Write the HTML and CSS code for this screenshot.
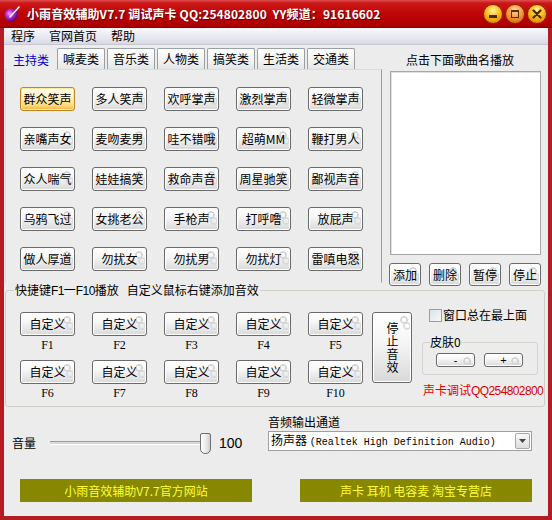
FILE: index.html
```html
<!DOCTYPE html>
<html lang="zh-CN">
<head>
<meta charset="utf-8">
<title>小雨音效辅助V7.7</title>
<link rel="stylesheet" href="styles.css">
</head>
<body>
<div class="window">
  <div class="titlebar">
    <svg class="app-icon" viewBox="0 0 18 18" width="18" height="18">
      <defs>
        <radialGradient id="ball" cx="40%" cy="40%" r="60%">
          <stop offset="0" stop-color="#f4a0ff"/>
          <stop offset="0.5" stop-color="#b02ad0"/>
          <stop offset="1" stop-color="#5a0a80"/>
        </radialGradient>
      </defs>
      <circle cx="8" cy="10" r="6.5" fill="url(#ball)"/>
      <path d="M7 12 L16 2" stroke="#fff" stroke-width="1.6" stroke-linecap="round"/>
      <path d="M9 9 L15 4" stroke="#f0c8ff" stroke-width="0.8"/>
    </svg>
    <span class="title">小雨音效辅助V7.7 调试声卡 QQ:254802800&nbsp;&nbsp;YY频道：91616602</span>
    <div class="ctrls">
      <span class="cb cb-min"><i class="g-min"></i></span>
      <span class="cb cb-max"><i class="g-max"></i></span>
      <span class="cb cb-close"><svg viewBox="0 0 10 10" width="10" height="10"><path d="M1.5 1.5 L8.5 8.5 M8.5 1.5 L1.5 8.5" stroke="#4a2a00" stroke-width="2.2" stroke-linecap="round"/></svg></span>
    </div>
  </div>
  <div class="frame">
    <div class="menubar">
      <span>程序</span><span>官网首页</span><span>帮助</span>
    </div>
    <div class="content">
      <div class="top">
        <div class="tabs-area">
          <div class="tabs">
            <span class="tab active">主持类</span>
            <span class="tab">喊麦类</span>
            <span class="tab">音乐类</span>
            <span class="tab">人物类</span>
            <span class="tab">搞笑类</span>
            <span class="tab">生活类</span>
            <span class="tab">交通类</span>
          </div>
          <div class="panel">
            <div class="grid">
              <span class="btn focus">群众笑声</span>
              <span class="btn">多人笑声</span>
              <span class="btn">欢呼掌声</span>
              <span class="btn">激烈掌声</span>
              <span class="btn">轻微掌声</span>
              <span class="btn">亲嘴声女</span>
              <span class="btn">麦吻麦男</span>
              <span class="btn">哇不错哦</span>
              <span class="btn">超萌MM</span>
              <span class="btn">鞭打男人</span>
              <span class="btn">众人喘气</span>
              <span class="btn">娃娃搞笑</span>
              <span class="btn">救命声音</span>
              <span class="btn">周星驰笑</span>
              <span class="btn">鄙视声音</span>
              <span class="btn">乌鸦飞过</span>
              <span class="btn">女挑老公</span>
              <span class="btn">手枪声</span>
              <span class="btn">打呼噜</span>
              <span class="btn">放屁声</span>
              <span class="btn">做人厚道</span>
              <span class="btn">勿扰女</span>
              <span class="btn">勿扰男</span>
              <span class="btn">勿扰灯</span>
              <span class="btn">雷嗔电怒</span>
            </div>
          </div>
        </div>
        <div class="playlist">
          <div class="pl-label">点击下面歌曲名播放</div>
          <div class="list"></div>
          <div class="pl-btns">
            <span class="btn sm">添加</span>
            <span class="btn sm">删除</span>
            <span class="btn sm">暂停</span>
            <span class="btn sm">停止</span>
          </div>
        </div>
      </div>

      <fieldset class="hotkeys">
        <legend>快捷键<span class="half">F1</span>一<span class="half">F10</span>播放&nbsp;&nbsp;&nbsp;自定义鼠标右键添加音效</legend>
        <div class="hk-body">
          <div class="hk-grid">
            <div class="hk"><span class="btn">自定义</span><span class="fk">F1</span></div>
            <div class="hk"><span class="btn">自定义</span><span class="fk">F2</span></div>
            <div class="hk"><span class="btn">自定义</span><span class="fk">F3</span></div>
            <div class="hk"><span class="btn">自定义</span><span class="fk">F4</span></div>
            <div class="hk"><span class="btn">自定义</span><span class="fk">F5</span></div>
            <div class="hk"><span class="btn">自定义</span><span class="fk">F6</span></div>
            <div class="hk"><span class="btn">自定义</span><span class="fk">F7</span></div>
            <div class="hk"><span class="btn">自定义</span><span class="fk">F8</span></div>
            <div class="hk"><span class="btn">自定义</span><span class="fk">F9</span></div>
            <div class="hk"><span class="btn">自定义</span><span class="fk">F10</span></div>
          </div>
          <span class="btn stop"><span class="vtext">停止音效</span></span>
          <div class="hk-right">
            <label class="chk-row"><span class="chk"></span>窗口总在最上面</label>
            <fieldset class="skin">
              <legend>皮肤0</legend>
              <div class="skin-btns">
                <span class="btn tiny">-</span>
                <span class="btn tiny">+</span>
              </div>
            </fieldset>
            <div class="qq">声卡调试<span class="half">QQ254802800</span></div>
          </div>
        </div>
      </fieldset>

      <div class="bottom">
        <div class="volume">
          <span class="vol-label">音量</span>
          <div class="slider">
            <span class="track"></span>
            <span class="thumb"></span>
          </div>
          <span class="vol-val">100</span>
        </div>
        <div class="output">
          <div class="out-label">音频输出通道</div>
          <div class="select">
            <span class="sel-text">扬声器 <span class="latin">(Realtek High Definition Audio)</span></span>
            <span class="drop"><svg viewBox="0 0 7 4" width="7" height="4"><path d="M0 0 L7 0 L3.5 4 Z" fill="#444"/></svg></span>
          </div>
        </div>
      </div>

      <div class="links">
        <span class="olive">小雨音效辅助V7.7官方网站</span>
        <span class="olive">声卡 耳机 电容麦 淘宝专营店</span>
      </div>
    </div>
  </div>
</div>
</body>
</html>
```

FILE: styles.css
```css
* {
  box-sizing: border-box;
  margin: 0;
  padding: 0;
}

html, body {
  width: 552px;
  height: 520px;
  overflow: hidden;
}

body {
  font-family: "Noto Sans CJK SC", "Noto Sans", sans-serif;
  font-size: 12px;
  line-height: 14px;
  color: #000;
  background: #fff;
}

.window {
  width: 552px;
  height: 520px;
  display: flex;
  flex-direction: column;
}

/* ---------- title bar ---------- */
.titlebar {
  height: 28px;
  flex: none;
  display: flex;
  align-items: center;
  padding-left: 3px;
  color: #fff;
  background: linear-gradient(to bottom, #e05050 0, #cc1818 3px, #c00808 45%, #b40000 80%, #a80000 100%);
  border-bottom: 1px solid #8a0000;
}

.app-icon {
  flex: none;
  margin-top: 1px;
}

.title {
  margin-left: 6px;
  font-weight: bold;
  font-size: 12px;
  letter-spacing: 0.1px;
  white-space: nowrap;
  text-shadow: 1px 1px 0 #700000;
}

.ctrls {
  margin-left: auto;
  margin-right: 5px;
  display: flex;
  gap: 2px;
}

.cb {
  width: 20px;
  height: 20px;
  border-radius: 50%;
  display: flex;
  align-items: center;
  justify-content: center;
  border: 1px solid #8a2a00;
  background: radial-gradient(circle at 50% 30%, #fff2a0 0, #ffc830 35%, #f09800 70%, #c86000 100%);
}

.cb-max {
  background: radial-gradient(circle at 50% 30%, #ffd8a0 0, #f8a850 35%, #e67a20 70%, #b85010 100%);
}

.g-min {
  display: block;
  width: 8px;
  height: 3px;
  margin-top: 6px;
  background: #4a2a00;
}

.g-max {
  display: block;
  width: 8px;
  height: 8px;
  border: 1px solid #5a3000;
  border-top-width: 2px;
}

/* ---------- frame ---------- */
.frame {
  flex: 1;
  display: flex;
  flex-direction: column;
  border: 4px solid #b41c24;
  border-top: 0;
  box-shadow: inset 1px 0 0 #d84a50, inset -1px 0 0 #d84a50;
}

.menubar {
  height: 17px;
  flex: none;
  display: flex;
  align-items: center;
  gap: 14px;
  padding-left: 7px;
  background: linear-gradient(to bottom, #f8f8fc, #e4e4ee 70%, #d8d8e4);
  border-bottom: 1px solid #c8c8d4;
}

.content {
  flex: 1;
  background: #ececec;
}

.half {
  font-family: "Liberation Sans", sans-serif;
  font-size: 12px;
  letter-spacing: -0.6px;
}

/* ---------- top area ---------- */
.top {
  height: 238px;
  display: flex;
}

.tabs-area {
  width: 377px;
  margin-left: 1px;
  padding-top: 3px;
  display: flex;
  flex-direction: column;
}

.tabs {
  height: 21px;
  display: flex;
  gap: 2px;
  padding-left: 2px;
}

.tab {
  width: 48px;
  height: 21px;
  display: flex;
  align-items: center;
  justify-content: center;
  border: 1px solid #9aa0a4;
  border-bottom: 0;
  border-radius: 2px 2px 0 0;
  background: linear-gradient(to bottom, #ffffff, #f2f2f2 60%, #e6e6e6);
}

.tab.active {
  color: #0000c8;
  border-color: transparent;
  background: #ececec;
  height: 22px;
  margin-bottom: -1px;
  position: relative;
  z-index: 1;
}

.panel {
  flex: 1;
  border: 1px solid #dcdcdc;
  border-right-color: #9a9a9a;
  border-bottom-color: transparent;
  padding: 17px 0 0 14px;
}

.grid {
  display: grid;
  grid-template-columns: repeat(5, 55px);
  grid-auto-rows: 24px;
  column-gap: 17px;
  row-gap: 16px;
}

/* ---------- buttons ---------- */
.btn {
  display: flex;
  align-items: center;
  justify-content: center;
  height: 24px;
  white-space: nowrap;
  border: 1px solid #6a6a6a;
  border-radius: 3px;
  background:
    radial-gradient(circle at calc(100% - 7px) 7px, transparent 2px, #d4d4d4 2.5px, #d4d4d4 3.5px, transparent 4px),
    radial-gradient(circle at calc(100% - 4px) 13px, transparent 2px, #dadada 2.5px, #dadada 3.5px, transparent 4px),
    linear-gradient(to bottom, #ffffff 0, #f6f6f6 40%, #e6e6e6 75%, #d8d8d8 100%);
  box-shadow: inset 0 0 0 1px #ffffff;
}

.btn.focus {
  border-color: #c4841a;
  background: linear-gradient(to bottom, #fffdf0 0, #fff1c0 45%, #fbd878 80%, #f0b440 100%);
  box-shadow: inset 0 0 0 1px #ffeaa0;
}

.playlist {
  flex: 1;
}

.pl-label {
  margin: 8px 0 0 24px;
  white-space: nowrap;
}

.list {
  margin: 4px 0 0 8px;
  width: 151px;
  height: 184px;
  background: #fff;
  border: 1px solid #a8a8a8;
  box-shadow: inset 1px 1px 0 #e0e0e0;
}

.pl-btns {
  display: flex;
  gap: 8px;
  margin: 8px 0 0 7px;
}

.btn.sm {
  width: 32px;
  height: 23px;
}

/* ---------- hotkeys group ---------- */
.hotkeys {
  margin: 0 3px 0 1px;
  height: 124px;
  border: 1px solid #d0d0c8;
  border-radius: 3px;
  padding: 0;
}

.hotkeys > legend {
  margin-left: 8px;
  padding: 0 1px;
  line-height: 14px;
  white-space: nowrap;
}

.hk-body {
  display: flex;
  align-items: flex-start;
}

.hk-grid {
  margin: 14px 0 0 14px;
  display: grid;
  grid-template-columns: repeat(5, 55px);
  column-gap: 17px;
  row-gap: 8px;
}

.hk {
  display: flex;
  flex-direction: column;
  align-items: center;
}

.hk .btn {
  width: 55px;
}

.fk {
  margin-top: 2px;
  line-height: 14px;
  font-family: "Liberation Serif", serif;
  font-size: 12px;
}

.btn.stop {
  margin: 14px 0 0 9px;
  width: 40px;
  height: 71px;
  flex: none;
}

.vtext {
  writing-mode: vertical-rl;
  text-orientation: upright;
  line-height: 12px;
  letter-spacing: 1px;
}

.hk-right {
  margin: 10px 0 0 9px;
  width: 118px;
}

.chk-row {
  display: flex;
  align-items: center;
  gap: 1px;
  height: 14px;
  margin-left: 8px;
  white-space: nowrap;
}

.chk {
  width: 13px;
  height: 13px;
  flex: none;
  border: 1px solid #8aa0b8;
  background: linear-gradient(135deg, #dce2ea, #f8f8f8);
}

.skin {
  margin: 13px 0 0 1px;
  width: 116px;
  border: 1px solid #d4d4cc;
  border-radius: 3px;
  padding: 0 0 7px 0;
}

.skin > legend {
  margin-left: 7px;
  line-height: 14px;
}

.skin-btns {
  display: flex;
  gap: 9px;
  margin: 4px 0 0 13px;
}

.btn.tiny {
  width: 39px;
  height: 14px;
  line-height: 12px;
  font-family: "Liberation Sans", sans-serif;
  font-size: 11px;
}

.qq {
  margin: 8px 0 0 2px;
  color: #e00000;
  white-space: nowrap;
  line-height: 14px;
}

/* ---------- bottom ---------- */
.bottom {
  height: 64px;
  display: flex;
  padding-top: 8px;
}

.volume {
  width: 264px;
  height: 22px;
  margin-top: 17px;
  padding-left: 8px;
  display: flex;
  align-items: center;
}

.vol-label {
  white-space: nowrap;
}

.slider {
  margin-left: 14px;
  width: 161px;
  height: 22px;
  display: flex;
  align-items: center;
}

.track {
  flex: 1;
  height: 4px;
  border-top: 1px solid #9c9c9c;
  border-bottom: 1px solid #ffffff;
  background: #d8d8d8;
}

.thumb {
  width: 11px;
  height: 21px;
  border: 1px solid #707070;
  border-radius: 2px 2px 5px 5px;
  background: linear-gradient(to right, #ffffff, #e8e8e8 60%, #cfcfcf);
}

.vol-val {
  margin-left: 8px;
  font-family: "Liberation Sans", sans-serif;
  font-size: 14px;
}

.output {
  width: 264px;
}

.out-label {
  line-height: 14px;
  white-space: nowrap;
}

.select {
  margin-top: 2px;
  height: 20px;
  display: flex;
  align-items: center;
  background: #fff;
  border: 1px solid #a0a0a0;
  padding-left: 2px;
}

.sel-text {
  flex: 1;
  white-space: nowrap;
}

.latin {
  font-family: "Liberation Mono", monospace;
  font-size: 10px;
}

.drop {
  width: 15px;
  height: 16px;
  margin-right: 1px;
  display: flex;
  align-items: center;
  justify-content: center;
  border: 1px solid #a8a8a8;
  border-radius: 2px;
  background: linear-gradient(to bottom, #fafafa, #dedede);
}

/* ---------- links ---------- */
.links {
  display: flex;
  gap: 48px;
  padding-left: 16px;
  margin-top: 8px;
}

.olive {
  width: 232px;
  height: 23px;
  display: flex;
  align-items: center;
  justify-content: center;
  background: #878700;
  color: #ffff30;
  white-space: nowrap;
}
```
